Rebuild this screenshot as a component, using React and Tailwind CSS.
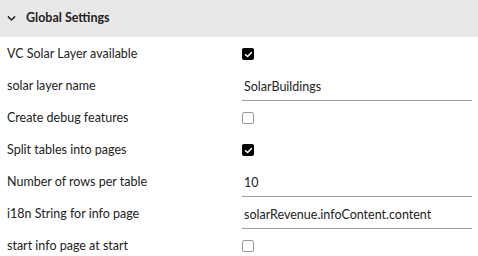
const ROWS = [
  { label: 'VC Solar Layer available', type: 'check', value: true },
  { label: 'solar layer name', type: 'text', value: 'SolarBuildings' },
  { label: 'Create debug features', type: 'check', value: false },
  { label: 'Split tables into pages', type: 'check', value: true },
  { label: 'Number of rows per table', type: 'text', value: '10' },
  { label: 'i18n String for info page', type: 'text', value: 'solarRevenue.infoContent.content' },
  { label: 'start info page at start', type: 'check', value: false },
];

export default function App() {
  return (
    <div className="w-[478px] h-[256px] overflow-hidden bg-white text-[#222]" style={{ fontFamily: 'Lato, "Open Sans", sans-serif' }}>
      {/* Header */}
      <div className="h-[37px] bg-[#e8e8e8] flex items-center pl-[7px] gap-[10px]">
        <svg className="w-[9px] h-[9px]" viewBox="0 0 10 10" fill="none" stroke="#1e1e1e" strokeWidth={1.6}>
          <path d="M1.5 3.2 L5 6.7 L8.5 3.2" strokeLinecap="round" strokeLinejoin="round" />
        </svg>
        <span className="text-[12.5px] font-bold">Global Settings</span>
      </div>

      {/* Rows */}
      <div className="flex flex-col pt-[1px]">
        {ROWS.map((r) => (
          <div key={r.label} className="h-[32px] grid grid-cols-[235px_1fr] items-center pl-[7px] pr-[6px]">
            <span className="text-[12.5px]">{r.label}</span>
            {r.type === 'check' ? <Check checked={r.value} /> : <TextField value={r.value} />}
          </div>
        ))}
      </div>
    </div>
  );
}

function Check({ checked }) {
  if (!checked) {
    return <div className="w-[12px] h-[12px] rounded-[2px] border border-[#9a9a9a] bg-white" />;
  }
  return (
    <div className="w-[12px] h-[12px] rounded-[2px] bg-black flex items-center justify-center">
      <svg className="w-[9px] h-[9px]" viewBox="0 0 10 10" fill="none" stroke="white" strokeWidth={1.7}>
        <path d="M1.8 5.2 L4 7.3 L8.3 2.8" strokeLinecap="round" strokeLinejoin="round" />
      </svg>
    </div>
  );
}

function TextField({ value }) {
  return (
    <div className="h-[27px] flex items-center border-b border-[#9e9e9e] pl-[2px] mt-[3px]">
      <span className="text-[12.5px]">{value}</span>
    </div>
  );
}
